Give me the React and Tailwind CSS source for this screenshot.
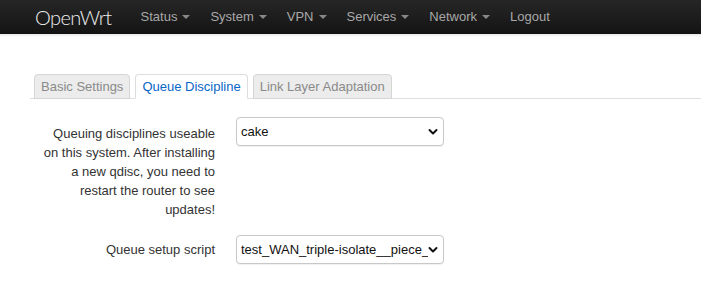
import React from "react";

const Caret = () => (
  <span className="ml-[5px] inline-block h-0 w-0 border-x-[4px] border-t-[4px] border-x-transparent border-t-[#888] align-middle" />
);

const Chevron = () => (
  <svg width="10" height="8" viewBox="0 0 10 8" className="shrink-0">
    <path d="M1.5 2 L5 5.5 L8.5 2" fill="none" stroke="#111" strokeWidth="2" strokeLinecap="round" strokeLinejoin="round" />
  </svg>
);

const Select = ({ value }) => (
  <div className="flex h-[29px] w-[208px] items-center rounded-[4px] border border-[#c8c8c8] bg-white pl-[4px] pr-[5px] shadow-[0_1px_1px_rgba(0,0,0,0.06)]">
    <span className="flex-1 overflow-hidden whitespace-nowrap text-[13px] text-[#111]">{value}</span>
    <Chevron />
  </div>
);

export default function App() {
  const nav = ["Status", "System", "VPN", "Services", "Network"];
  return (
    <div className="h-[285px] w-[701px] overflow-hidden bg-white" style={{ fontFamily: '"Liberation Sans", Arial, sans-serif' }}>
      <div className="flex h-[34px] items-center bg-gradient-to-b from-[#262626] to-[#141414] pl-[35px]">
        <span className="mr-[19px] text-[20px] font-light tracking-[-0.6px] text-[#eee]" style={{ fontFamily: 'Lato, "Liberation Sans", sans-serif' }}>OpenWrt</span>
        <div className="flex items-center">
          {nav.map((n) => (
            <span key={n} className="flex items-center px-[10px] text-[13px] text-[#a8a8a8]">
              {n}
              <Caret />
            </span>
          ))}
          <span className="px-[10px] text-[13px] text-[#a8a8a8]">Logout</span>
        </div>
      </div>
      <div className="h-[3px] bg-gradient-to-b from-[#e8e8e8] to-white" />

      <div className="pl-[30px] pt-[37px]">
        <div className="flex gap-[5px] border-b border-[#ddd] pl-[4px]">
          <span className="-mb-px flex h-[25px] items-center rounded-t-[4px] border border-[#d5d5d5] bg-[#ececec] px-[6px] text-[13px] text-[#8a8a8a]">Basic Settings</span>
          <span className="-mb-px flex h-[25px] items-center rounded-t-[4px] border border-[#ddd] border-b-white bg-white px-[6px] text-[13px] text-[#0a66c8]">Queue Discipline</span>
          <span className="-mb-px flex h-[25px] items-center rounded-t-[4px] border border-[#d5d5d5] bg-[#ececec] px-[6px] text-[13px] text-[#8a8a8a]">Link Layer Adaptation</span>
        </div>

        <div className="flex pt-[18px]">
          <div className="w-[185px] pl-[5px] pt-[7px] text-right text-[13px] leading-[19px] text-[#333]">
            Queuing disciplines useable<br />
            on this system. After installing<br />
            a new qdisc, you need to<br />
            restart the router to see<br />
            updates!
          </div>
          <div className="pl-[21px]">
            <Select value="cake" />
          </div>
        </div>

        <div className="flex items-center pt-[16px]">
          <div className="w-[185px] text-right text-[13px] text-[#333]">Queue setup script</div>
          <div className="pl-[21px]">
            <Select value="test_WAN_triple-isolate__piece_of_cake.qos" />
          </div>
        </div>
      </div>
    </div>
  );
}
